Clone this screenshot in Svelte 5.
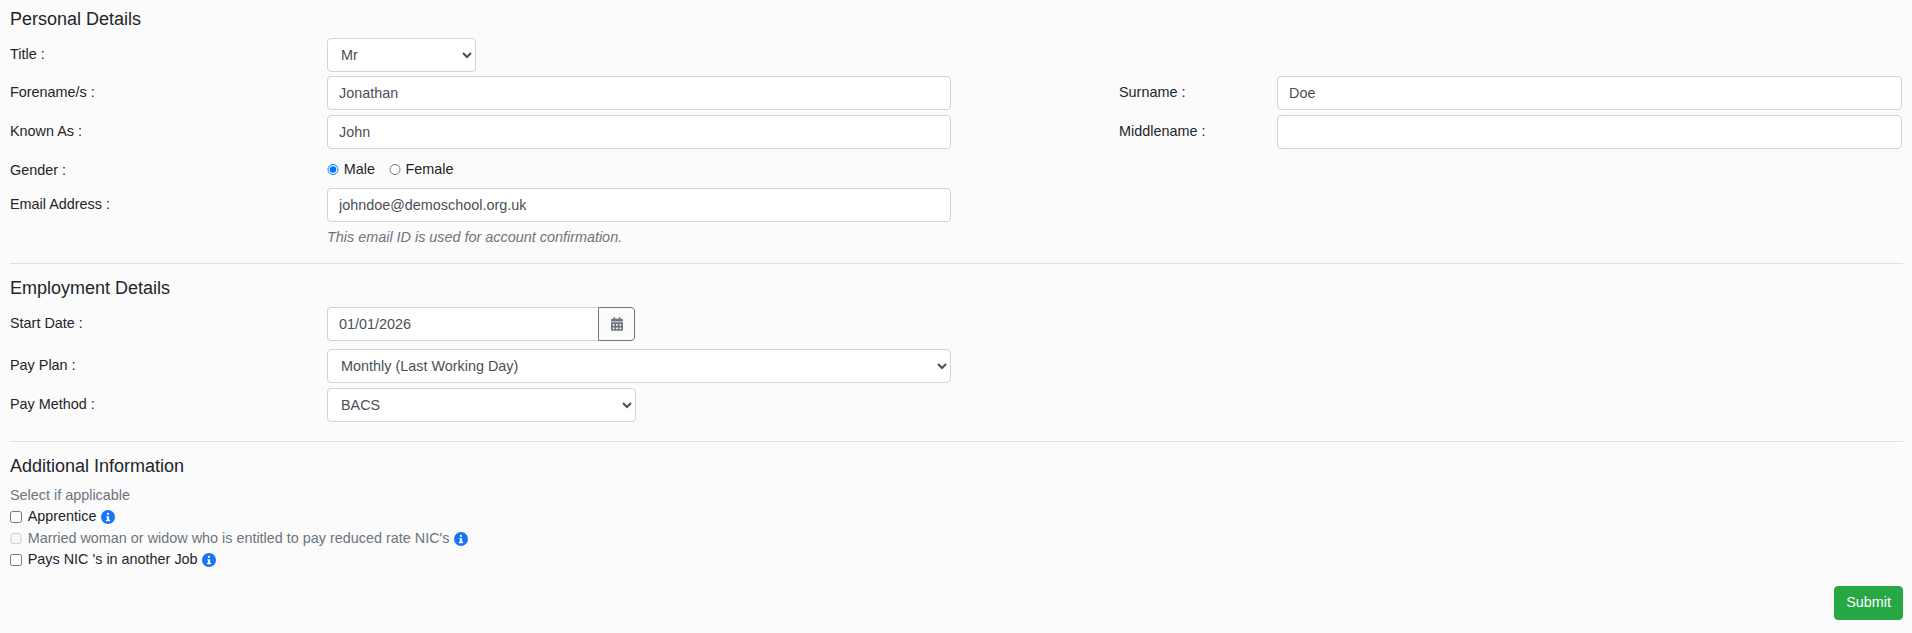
<script lang="ts">
	// Staff details form: three sections split by rules, submit at the bottom right.
	let title = $state('Mr');
	let gender = $state('Male');
	let payPlan = $state('Monthly (Last Working Day)');
	let payMethod = $state('BACS');
</script>

{#snippet info()}
	<svg class="info" viewBox="0 0 512 512" width="14" height="14" aria-hidden="true">
		<circle cx="256" cy="256" r="256" fill="#1575f5" />
		<path fill="#fff" d="M256 104a40 40 0 1 1 0 80 40 40 0 0 1 0-80zM208 224h72a16 16 0 0 1 16 16v120h24a16 16 0 0 1 16 16v16a16 16 0 0 1-16 16H192a16 16 0 0 1-16-16v-16a16 16 0 0 1 16-16h24v-88h-8a16 16 0 0 1-16-16v-16a16 16 0 0 1 16-16z" />
	</svg>
{/snippet}

<form class="page" onsubmit={(e) => e.preventDefault()}>
	<section>
		<h2>Personal Details</h2>
		<div class="row title-row">
			<label for="title">Title :</label>
			<select id="title" class="field short" bind:value={title}>
				<option>Mr</option>
				<option>Mrs</option>
				<option>Ms</option>
			</select>
		</div>
		<div class="row">
			<label for="forename">Forename/s :</label>
			<input id="forename" class="field main" value="Jonathan" />
			<label class="second" for="surname">Surname :</label>
			<input id="surname" class="field wide" value="Doe" />
		</div>
		<div class="row">
			<label for="known">Known As :</label>
			<input id="known" class="field main" value="John" />
			<label class="second" for="middle">Middlename :</label>
			<input id="middle" class="field wide" />
		</div>
		<div class="row gender">
			<span class="lbl">Gender :</span>
			<div class="radios">
				<label><input type="radio" name="gender" value="Male" bind:group={gender} />Male</label>
				<label><input type="radio" name="gender" value="Female" bind:group={gender} />Female</label>
			</div>
		</div>
		<div class="row">
			<label for="email">Email Address :</label>
			<div>
				<input id="email" class="field main" value="johndoe@demoschool.org.uk" />
				<small>This email ID is used for account confirmation.</small>
			</div>
		</div>
	</section>

	<hr />

	<section>
		<h2>Employment Details</h2>
		<div class="row date-row">
			<label for="start">Start Date :</label>
			<div class="date">
				<input id="start" class="field" value="01/01/2026" />
				<button type="button" aria-label="Pick a date">
					<svg viewBox="0 0 448 512" width="12" height="14" aria-hidden="true">
						<path fill="#6c757d" d="M0 464a48 48 0 0 0 48 48h352a48 48 0 0 0 48-48V192H0zm320-196a12 12 0 0 1 12-12h40a12 12 0 0 1 12 12v40a12 12 0 0 1-12 12h-40a12 12 0 0 1-12-12zm0 128a12 12 0 0 1 12-12h40a12 12 0 0 1 12 12v40a12 12 0 0 1-12 12h-40a12 12 0 0 1-12-12zM192 268a12 12 0 0 1 12-12h40a12 12 0 0 1 12 12v40a12 12 0 0 1-12 12h-40a12 12 0 0 1-12-12zm0 128a12 12 0 0 1 12-12h40a12 12 0 0 1 12 12v40a12 12 0 0 1-12 12h-40a12 12 0 0 1-12-12zM64 268a12 12 0 0 1 12-12h40a12 12 0 0 1 12 12v40a12 12 0 0 1-12 12H76a12 12 0 0 1-12-12zm0 128a12 12 0 0 1 12-12h40a12 12 0 0 1 12 12v40a12 12 0 0 1-12 12H76a12 12 0 0 1-12-12zM400 64h-48V16a16 16 0 0 0-16-16h-32a16 16 0 0 0-16 16v48H160V16a16 16 0 0 0-16-16h-32a16 16 0 0 0-16 16v48H48a48 48 0 0 0-48 48v48h448v-48a48 48 0 0 0-48-48z" />
					</svg>
				</button>
			</div>
		</div>
		<div class="row">
			<label for="plan">Pay Plan :</label>
			<select id="plan" class="field main" bind:value={payPlan}>
				<option>Monthly (Last Working Day)</option>
				<option>Weekly</option>
			</select>
		</div>
		<div class="row">
			<label for="method">Pay Method :</label>
			<select id="method" class="field medium" bind:value={payMethod}>
				<option>BACS</option>
				<option>Cheque</option>
			</select>
		</div>
	</section>

	<hr class="second-rule" />

	<section>
		<h2>Additional Information</h2>
		<p class="hint">Select if applicable</p>
		<label class="check"><input type="checkbox" />Apprentice {@render info()}</label>
		<label class="check off"><input type="checkbox" disabled />Married woman or widow who is entitled to pay reduced rate NIC's {@render info()}</label>
		<label class="check"><input type="checkbox" />Pays NIC 's in another Job {@render info()}</label>
	</section>

	<div class="actions">
		<button class="submit" type="submit">Submit</button>
	</div>
</form>

<style>
	:global(body) {
		background: #fbfbfb;
	}

	.page {
		box-sizing: border-box;
		height: 633px;
		padding: 9px 9px 0 10px;
		font-family: "Liberation Sans", Arial, sans-serif;
		font-size: 14.4px;
		line-height: 21.6px;
		color: #212529;
	}

	h2 {
		margin: 0 0 8px;
		font-size: 18px;
		font-weight: 500;
		line-height: 21px;
	}

	.row {
		display: grid;
		grid-template-columns: 317px 624px 168px 158px 625px;
		align-items: start;
		margin-bottom: 5px;
	}

	.row > label,
	.lbl {
		padding-top: 6px;
	}

	.row > .second {
		grid-column: 4;
	}

	.field {
		box-sizing: border-box;
		display: block;
		height: 34px;
		padding: 0 11px;
		border: 1px solid #ced4da;
		border-radius: 4px;
		background: #fff;
		color: #495057;
		font: inherit;
	}

	select.field {
		padding: 0 9px;
	}

	.short {
		width: 149px;
	}

	.main {
		width: 624px;
	}

	.wide {
		width: 625px;
	}

	.medium {
		width: 309px;
	}

	.title-row {
		margin-bottom: 4px;
	}

	.date-row {
		margin-bottom: 8px;
	}

	.gender {
		height: 29px;
		align-items: center;
	}

	.gender .lbl {
		padding-top: 4px;
	}

	.radios {
		display: flex;
		gap: 14px;
		margin-top: 2px;
	}

	.radios label {
		display: flex;
		align-items: center;
	}

	.radios input {
		width: 11.7px;
		height: 11.7px;
		margin: 0 5px 0 0;
	}

	small {
		display: block;
		margin-top: 5px;
		font-size: 14.4px;
		font-style: italic;
		color: #6c757d;
	}

	hr {
		height: 1px;
		margin: 14px 0 14px;
		border: 0;
		background: #dee0e2;
	}

	.date {
		display: flex;
		width: 308px;
	}

	.date .field {
		flex: 1;
		min-width: 0;
		border-right: 0;
		border-radius: 4px 0 0 4px;
	}

	.date button {
		display: flex;
		align-items: center;
		justify-content: center;
		width: 37px;
		height: 34px;
		padding: 0;
		border: 1px solid #6c757d;
		border-radius: 0 4px 4px 0;
		background: transparent;
	}

	.second-rule {
		margin-top: 19px;
	}

	.hint {
		margin: 8px 0 0;
		color: #6c757d;
	}

	.check {
		display: flex;
		align-items: center;
		height: 21.6px;
	}

	.check input {
		width: 11.7px;
		height: 11.7px;
		margin: 0 6px 0 0;
	}

	.check.off {
		color: #6c757d;
	}

	.info {
		margin-left: 4.5px;
	}

	.actions {
		display: flex;
		justify-content: flex-end;
		margin-top: 15px;
	}

	.submit {
		height: 34px;
		padding: 0 11px;
		border: 1px solid #28a745;
		border-radius: 4px;
		background: #28a745;
		color: #fff;
		font: inherit;
	}
</style>
